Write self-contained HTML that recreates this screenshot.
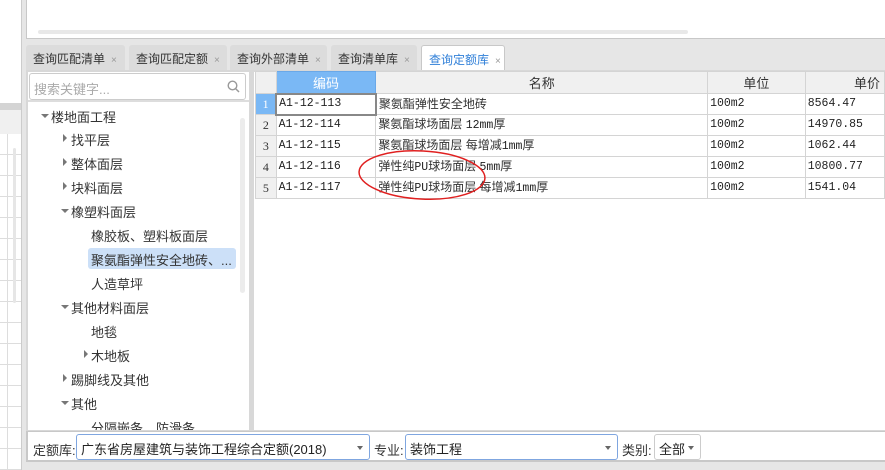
<!DOCTYPE html>
<html><head><meta charset="utf-8"><style>
*{box-sizing:border-box;margin:0;padding:0}
body{width:885px;height:470px;overflow:hidden;background:#e6e6e6;position:relative;font-family:"Liberation Sans","Noto Sans CJK SC",sans-serif;font-size:13px;color:#333}
.a{position:absolute}
.tab{position:absolute;top:45px;height:25px;background:#dcdcdc;border-radius:3px 3px 0 0;padding:5px 0 0 7px;font-size:12px;color:#333;white-space:nowrap}
.tab i{font-style:normal;color:#999;font-size:10px;margin-left:6px}
.tr{position:absolute;font-size:13px;color:#333;white-space:nowrap}
.ar{position:absolute;width:0;height:0}
.rt{border-left:4px solid #777;border-top:4px solid transparent;border-bottom:4px solid transparent}
.dn{border-top:4px solid #777;border-left:4px solid transparent;border-right:4px solid transparent}
table{border-collapse:collapse;position:absolute;left:255px;top:71px;background:#fff}
td{border:1px solid #d4d4d4;height:21px;font-size:12px;padding:0 2px;white-space:nowrap;overflow:hidden;line-height:16px}
th{border:1px solid #d4d4d4;height:22px;background:#f0f0f0;font-weight:normal;font-size:13px;color:#333}
.c{font-family:"Liberation Mono","Noto Sans CJK SC",monospace;font-size:11.5px;color:#222}
.n{font-family:"Liberation Serif",serif;text-align:center;background:#f0f0f0;font-size:12px}
.sel{position:absolute;top:434px;height:26px;border:1px solid #7fa6e0;border-radius:3px;background:#fff;padding:4px 0 0 4px;font-size:13px;color:#222}
.sel:after{content:"";position:absolute;right:6px;top:11px;border-top:4px solid #666;border-left:3px solid transparent;border-right:3px solid transparent}
</style></head><body>
<div class="a" style="left:0;top:0;width:22px;height:103px;background:#fff"></div>
<div class="a" style="left:0;top:103px;width:22px;height:7px;background:#d4d4d4"></div>
<div class="a" style="left:0;top:110px;width:22px;height:24px;background:#f0f0f0"></div>
<div class="a" style="left:0;top:134px;width:22px;height:336px;background:#fff;background-image:repeating-linear-gradient(to bottom,#fff 0 20px,#ddd 20px 21px)"></div>
<div class="a" style="left:7px;top:134px;width:1px;height:336px;background:#ddd"></div>
<div class="a" style="left:13px;top:148px;width:3px;height:155px;background:#e6e6e6;border-radius:2px"></div>
<div class="a" style="left:21px;top:0;width:1px;height:470px;background:#ccc"></div>
<div class="a" style="left:26px;top:0;width:859px;height:39px;background:#fff;border-left:1px solid #c8c8c8;border-bottom:1px solid #c8c8c8"></div>
<div class="a" style="left:38px;top:30px;width:650px;height:4px;background:#e8e8e8;border-radius:2px"></div>
<div class="tab" style="left:26px;width:99px">查询匹配清单<i>×</i></div>
<div class="tab" style="left:129px;width:98px">查询匹配定额<i>×</i></div>
<div class="tab" style="left:230px;width:97px">查询外部清单<i>×</i></div>
<div class="tab" style="left:331px;width:86px">查询清单库<i>×</i></div>
<div class="tab" style="left:421px;width:84px;background:#fff;border:1px solid #c8c8c8;border-bottom:none;color:#2f7fd8">查询定额库<i>×</i></div>
<div class="a" style="left:26px;top:70px;width:859px;height:362px;background:#d8d8d8"></div>
<div class="a" style="left:28px;top:72px;width:221px;height:358px;background:#fff"></div>
<div class="a" style="left:29px;top:73px;width:217px;height:27px;border:1px solid #ccc;border-radius:3px;background:#fff;padding:5px 0 0 4px;color:#aaa">搜索关键字...</div>
<svg class="a" style="left:227px;top:80px" width="13" height="13"><circle cx="5.5" cy="5.5" r="4.3" fill="none" stroke="#999" stroke-width="1.4"/><line x1="8.6" y1="8.6" x2="12" y2="12" stroke="#999" stroke-width="1.5"/></svg>
<div class="a" style="left:28px;top:100px;width:221px;height:2px;background:#ddd"></div>
<div class="a" style="left:240px;top:118px;width:5px;height:175px;background:#ececec;border-radius:3px"></div>
<div class="a" style="left:88px;top:248px;width:148px;height:21px;background:#cce0f8;border-radius:3px"></div>
<div class="ar dn" style="left:41px;top:114px"></div><div class="tr" style="left:51px;top:107px">楼地面工程</div>
<div class="ar rt" style="left:63px;top:134px"></div><div class="tr" style="left:71px;top:130px">找平层</div>
<div class="ar rt" style="left:63px;top:158px"></div><div class="tr" style="left:71px;top:154px">整体面层</div>
<div class="ar rt" style="left:63px;top:182px"></div><div class="tr" style="left:71px;top:178px">块料面层</div>
<div class="ar dn" style="left:61px;top:209px"></div><div class="tr" style="left:71px;top:202px">橡塑料面层</div>
<div class="tr" style="left:91px;top:226px">橡胶板、塑料板面层</div>
<div class="tr" style="left:91px;top:250px">聚氨酯弹性安全地砖、...</div>
<div class="tr" style="left:91px;top:274px">人造草坪</div>
<div class="ar dn" style="left:61px;top:305px"></div><div class="tr" style="left:71px;top:298px">其他材料面层</div>
<div class="tr" style="left:91px;top:322px">地毯</div>
<div class="ar rt" style="left:84px;top:350px"></div><div class="tr" style="left:91px;top:346px">木地板</div>
<div class="ar rt" style="left:63px;top:374px"></div><div class="tr" style="left:71px;top:370px">踢脚线及其他</div>
<div class="ar dn" style="left:61px;top:401px"></div><div class="tr" style="left:71px;top:394px">其他</div>
<div class="tr" style="left:91px;top:418px;height:12px;overflow:hidden">分隔嵌条、防滑条</div>
<div class="a" style="left:254px;top:72px;width:631px;height:358px;background:#fff"></div>
<table>
<tr><th style="width:21px"></th><th style="width:101px;background:#7ab8f5;color:#fff;border-color:#6aa8e8">编码</th><th style="width:338px">名称</th><th style="width:100px">单位</th><th style="width:80px;text-align:right;padding-right:4px">单价</th></tr>
<tr><td class="n" style="background:#7ab8f5;color:#fff">1</td><td class="c" style="border:2px solid #888">A1-12-113</td><td>聚氨酯弹性安全地砖</td><td class="c">100m2</td><td class="c">8564.47</td></tr>
<tr><td class="n">2</td><td class="c">A1-12-114</td><td>聚氨酯球场面层 <span class="c">12mm</span>厚</td><td class="c">100m2</td><td class="c">14970.85</td></tr>
<tr><td class="n">3</td><td class="c">A1-12-115</td><td>聚氨酯球场面层 每增减<span class="c">1mm</span>厚</td><td class="c">100m2</td><td class="c">1062.44</td></tr>
<tr><td class="n">4</td><td class="c">A1-12-116</td><td>弹性纯<span class="c">PU</span>球场面层 <span class="c">5mm</span>厚</td><td class="c">100m2</td><td class="c">10800.77</td></tr>
<tr><td class="n">5</td><td class="c">A1-12-117</td><td>弹性纯<span class="c">PU</span>球场面层 每增减<span class="c">1mm</span>厚</td><td class="c">100m2</td><td class="c">1541.04</td></tr>
</table>
<svg class="a" style="left:350px;top:145px" width="150" height="60"><ellipse cx="72" cy="30" rx="63" ry="24" fill="none" stroke="#e02020" stroke-width="1.5" transform="rotate(3 72 30)"/></svg>
<div class="a" style="left:26px;top:431px;width:859px;height:31px;background:#fff;border-top:1px solid #c8c8c8;border-bottom:2px solid #c8c8c8;border-left:2px solid #c8c8c8"></div>
<div class="tr" style="left:33px;top:440px">定额库:</div>
<div class="sel" style="left:76px;width:294px">广东省房屋建筑与装饰工程综合定额(2018)</div>
<div class="tr" style="left:374px;top:440px">专业:</div>
<div class="sel" style="left:405px;width:213px">装饰工程</div>
<div class="tr" style="left:622px;top:440px">类别:</div>
<div class="sel" style="left:654px;width:47px;border-color:#ccc">全部</div>
</body></html>
